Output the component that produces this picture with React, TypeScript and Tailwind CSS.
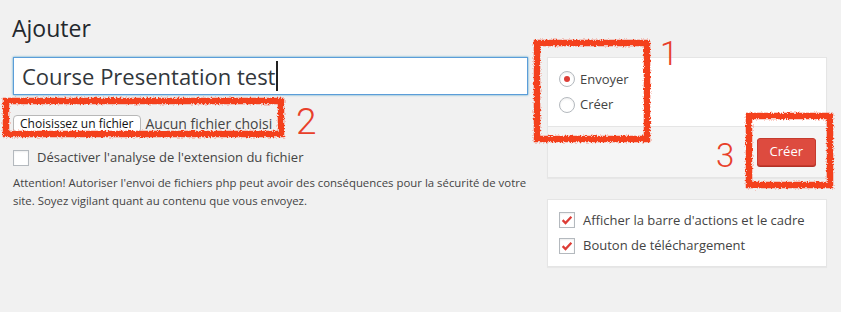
import React from "react";

const font = { fontFamily: '"Open Sans", "Noto Sans", sans-serif' };

function Check() {
  return (
    <span className="flex h-4 w-4 items-center justify-center border border-[#b4b9be] bg-white shadow-[inset_0_1px_2px_rgba(0,0,0,0.07)]">
      <svg viewBox="0 0 16 16" className="h-[14px] w-[14px]">
        <path d="M3 8.2 L6.3 11.5 L13 4.3" fill="none" stroke="#dd3d36" strokeWidth="2.6" />
      </svg>
    </span>
  );
}

function Radio({ checked }: { checked?: boolean }) {
  return (
    <span className="flex h-4 w-4 items-center justify-center rounded-full border border-[#b4b9be] bg-white shadow-[inset_0_1px_2px_rgba(0,0,0,0.07)]">
      {checked && <span className="h-[6px] w-[6px] rounded-full bg-[#dd3d36]" />}
    </span>
  );
}

function Marks() {
  return (
    <svg className="pointer-events-none absolute left-0 top-0" width="841" height="312">
      <defs>
        <filter id="rough">
          <feTurbulence type="fractalNoise" baseFrequency="0.6" numOctaves="2" seed="3" />
          <feDisplacementMap in="SourceGraphic" scale="4" />
        </filter>
      </defs>
      <g fill="none" stroke="#f4411f" strokeWidth="6.5" filter="url(#rough)">
        <rect x="6" y="101" width="275" height="33" />
        <rect x="537" y="43" width="110" height="96" />
        <rect x="749" y="116" width="81" height="69" />
      </g>
    </svg>
  );
}

const num = "absolute font-light leading-none text-[#e8402a]";
const numFont = { fontFamily: "Roboto, sans-serif" };

export default function App() {
  return (
    <div className="relative h-[312px] w-[841px] overflow-hidden bg-[#f1f1f1] text-[#444]" style={font}>
      <h1 className="px-[12px] pt-[14px] text-[23px] leading-[29px] text-[#23282d]">Ajouter</h1>
      <div className="mt-[14px] flex gap-[19px] pl-[13px]">
        <div className="w-[515px]">
          <div className="flex h-[38px] items-center border border-[#5b9dd9] bg-white pl-[8px] text-[22px] text-[#32373c] shadow-[0_0_2px_rgba(30,140,190,0.8)]">
            <span>Course Presentation test</span>
            <span className="ml-[1px] h-[30px] w-[1.5px] bg-[#222]" />
          </div>
          <div className="mt-[18px] flex items-center gap-[5px]">
            <span className="flex h-[18px] items-center rounded-[4px] border border-[#b8b8b8] bg-white px-[6px] text-[12px] text-[#111]">
              Choisissez un fichier
            </span>
            <span className="text-[14px] text-[#444]">Aucun fichier choisi</span>
          </div>
          <label className="mt-[14px] flex items-center gap-[8px] text-[13px]">
            <span className="h-4 w-4 border border-[#b4b9be] bg-white shadow-[inset_0_1px_2px_rgba(0,0,0,0.07)]" />
            Désactiver l'analyse de l'extension du fichier
          </label>
          <p className="mt-[6px] text-[11.4px] leading-[18px] text-[#444]">
            Attention! Autoriser l'envoi de fichiers php peut avoir des conséquences pour la sécurité de votre site. Soyez vigilant quant au contenu que vous envoyez.
          </p>
        </div>
        <div className="w-[280px]">
          <div className="border border-[#e5e5e5] bg-white shadow-[0_1px_1px_rgba(0,0,0,0.04)]">
            <div className="flex h-[68px] flex-col justify-center gap-[6px] px-[11px] text-[13px]">
              <label className="flex items-center gap-[5px]">
                <Radio checked />
                Envoyer
              </label>
              <label className="flex items-center gap-[5px]">
                <Radio />
                Créer
              </label>
            </div>
            <div className="flex h-[51px] items-center justify-end border-t border-[#e5e5e5] bg-[#f5f5f5] pr-[10px]">
              <span className="flex h-[28px] items-center rounded-[3px] border border-[#c53b2e] bg-[#dd4b3f] px-[12px] text-[13px] text-white shadow-[0_1px_0_#b23127]">
                Créer
              </span>
            </div>
          </div>
          <div className="mt-[21px] flex h-[68px] flex-col justify-center gap-[6px] border border-[#e5e5e5] bg-white px-[11px] text-[13px] shadow-[0_1px_1px_rgba(0,0,0,0.04)]">
            <label className="flex items-center gap-[8px]">
              <Check />
              Afficher la barre d'actions et le cadre
            </label>
            <label className="flex items-center gap-[8px]">
              <Check />
              Bouton de téléchargement
            </label>
          </div>
        </div>
      </div>
      <Marks />
      <span className={`${num} left-[296px] top-[103px] text-[37px]`} style={numFont}>2</span>
      <span className={`${num} left-[660px] top-[37px] text-[33px]`} style={numFont}>1</span>
      <span className={`${num} left-[716px] top-[139px] text-[33px]`} style={numFont}>3</span>
    </div>
  );
}
